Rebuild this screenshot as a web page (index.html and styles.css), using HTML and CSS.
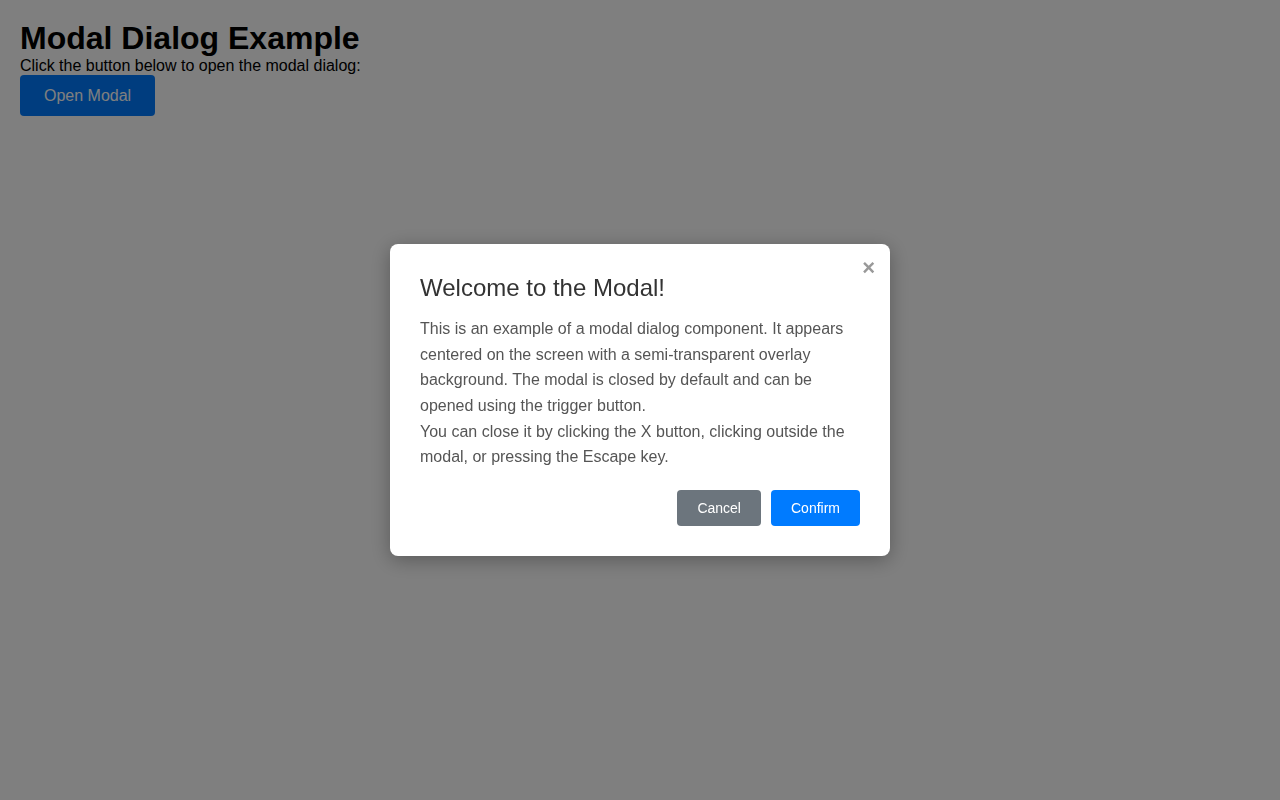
FILE: index.html
```html
<!DOCTYPE html>
<html lang="en">
<head>
<meta charset="utf-8">
<title>Modal Dialog Example</title>
<link rel="stylesheet" href="styles.css">
</head>
<body>
<main class="page">
  <h1 class="page-title">Modal Dialog Example</h1>
  <p class="page-text">Click the button below to open the modal dialog:</p>
  <button class="btn btn-open">Open Modal</button>
</main>
<div class="overlay">
  <div class="modal" role="dialog" aria-modal="true">
    <button class="modal-close" aria-label="Close">&times;</button>
    <h2 class="modal-title">Welcome to the Modal!</h2>
    <p class="modal-text">This is an example of a modal dialog component. It appears centered on the screen with a semi-transparent overlay background. The modal is closed by default and can be opened using the trigger button.<br>You can close it by clicking the X button, clicking outside the modal, or pressing the Escape key.</p>
    <div class="modal-footer">
      <button class="btn btn-small btn-cancel">Cancel</button>
      <button class="btn btn-small btn-confirm">Confirm</button>
    </div>
  </div>
</div>
</body>
</html>
```

FILE: styles.css
```css
html, body {
  margin: 0;
  padding: 0;
  height: 100%;
}
body {
  font-family: "Liberation Sans", Arial, sans-serif;
  background: #ffffff;
  color: #000;
}
.page {
  padding: 20px;
}
.page-title {
  margin: 0;
  font-size: 32px;
  line-height: 37px;
  font-weight: bold;
}
.page-text {
  margin: 0;
  font-size: 16px;
  line-height: 18px;
}
.btn {
  border: none;
  border-radius: 4px;
  font-family: inherit;
  cursor: pointer;
}
.btn-open {
  background: #007bff;
  color: #fff;
  font-size: 16px;
  line-height: 17px;
  padding: 12px 24px;
}
.overlay {
  position: fixed;
  inset: 0;
  background: rgba(0, 0, 0, 0.502);
  display: flex;
  align-items: center;
  justify-content: center;
}
.modal {
  position: relative;
  width: 500px;
  box-sizing: border-box;
  padding: 30px;
  background: #fff;
  border-radius: 8px;
  box-shadow: 0 4px 20px rgba(0, 0, 0, 0.3);
}
.modal-close {
  position: absolute;
  top: 12px;
  right: 15px;
  background: none;
  border: none;
  padding: 0;
  font-family: inherit;
  font-size: 22px;
  line-height: 24px;
  font-weight: bold;
  color: #999;
  cursor: pointer;
}
.modal-title {
  margin: 0 0 14px;
  font-size: 24px;
  line-height: 28px;
  font-weight: normal;
  color: #333;
}
.modal-text {
  margin: 0;
  font-size: 16px;
  line-height: 1.6;
  color: #555;
}
.modal-footer {
  margin-top: 20px;
  display: flex;
  justify-content: flex-end;
  gap: 10px;
}
.btn-small {
  font-size: 14px;
  line-height: 16px;
  padding: 10px 20px;
  color: #fff;
}
.btn-cancel {
  background: #6c757d;
}
.btn-confirm {
  background: #007bff;
}
```
